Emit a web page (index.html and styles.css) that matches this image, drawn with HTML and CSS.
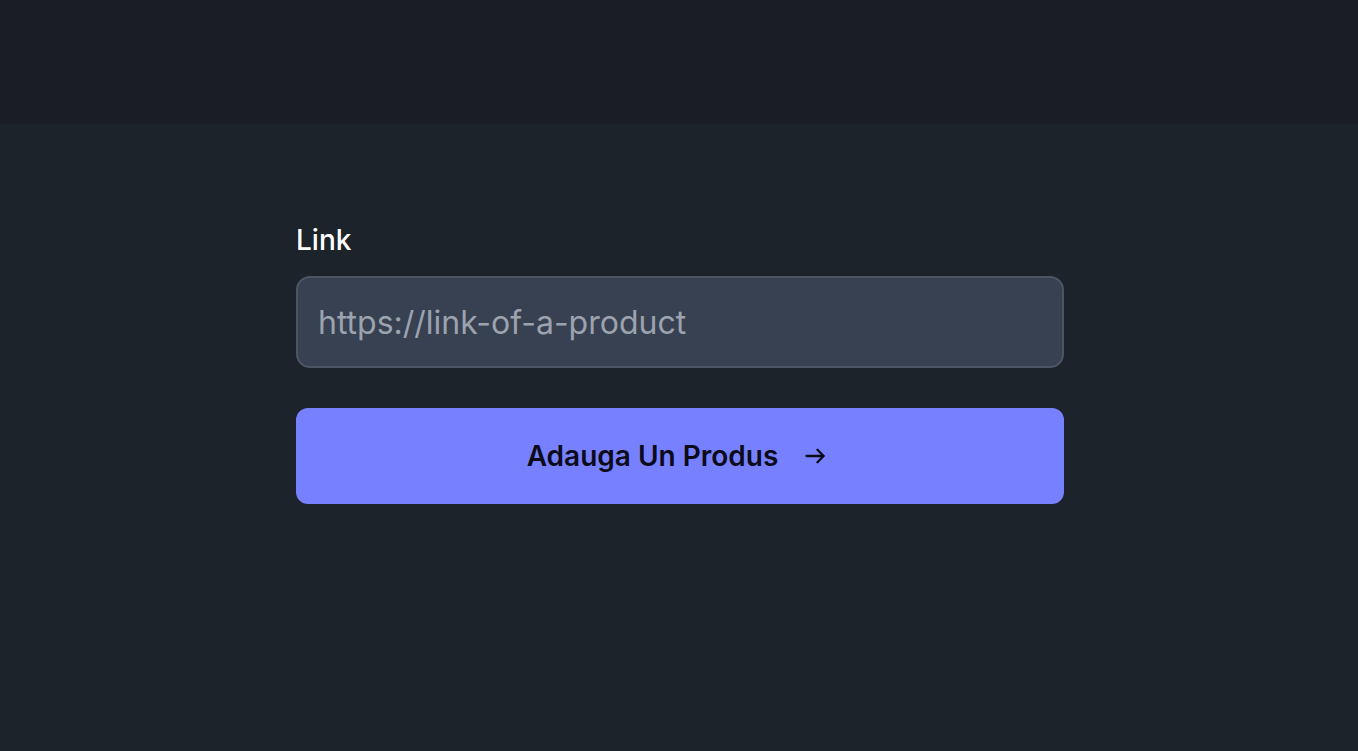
FILE: index.html
```html
<!DOCTYPE html>
<html>
<head>
<meta charset="utf-8">
<link rel="stylesheet" href="styles.css">
</head>
<body>
<header class="topbar"></header>
<main class="main">
  <form class="form">
    <label class="label" for="link">Link</label>
    <input class="input" id="link" type="text" placeholder="https://link-of-a-product">
    <button class="btn" type="button">
      <span>Adauga Un Produs</span>
      <svg class="arrow" width="20" height="20" viewBox="0 0 20 20" fill="none" stroke="currentColor" stroke-width="2.3" stroke-linecap="round" stroke-linejoin="round"><path d="M1.5 10h17"/><path d="M12.5 3.8L18.5 10l-6 6.2"/></svg>
    </button>
  </form>
</main>
</body>
</html>
```
FILE: styles.css
```css
* { box-sizing: border-box; }
html, body { margin: 0; padding: 0; height: 100%; }
body {
  background: #1d232a;
  font-family: Inter, "Noto Sans", sans-serif;
  color: #fff;
}
.topbar {
  height: 124px;
  background: #1a1d25;
}
.main {
  display: flex;
  justify-content: center;
  padding-top: 100px;
  padding-left: 2px;
}
.form {
  width: 768px;
  display: flex;
  flex-direction: column;
}
.label {
  font-size: 28px;
  line-height: 32px;
  font-weight: 500;
  color: #fff;
  margin-bottom: 20px;
}
.input {
  height: 92px;
  border: 2px solid #4b5563;
  border-radius: 14px;
  background: #374151;
  padding: 0 20px;
  font-family: Inter, sans-serif;
  font-size: 32px;
  color: #fff;
  outline: none;
}
.input::placeholder { color: #9ca3af; }
.btn {
  margin-top: 40px;
  height: 96px;
  border: none;
  border-radius: 12px;
  background: #7781ff;
  color: #0b0b1a;
  font-family: Inter, sans-serif;
  font-size: 28px;
  font-weight: 600;
  display: flex;
  align-items: center;
  justify-content: center;
  gap: 27px;
  padding: 0 8px 0 0;
  cursor: pointer;
}
.arrow { display: block; }
```
